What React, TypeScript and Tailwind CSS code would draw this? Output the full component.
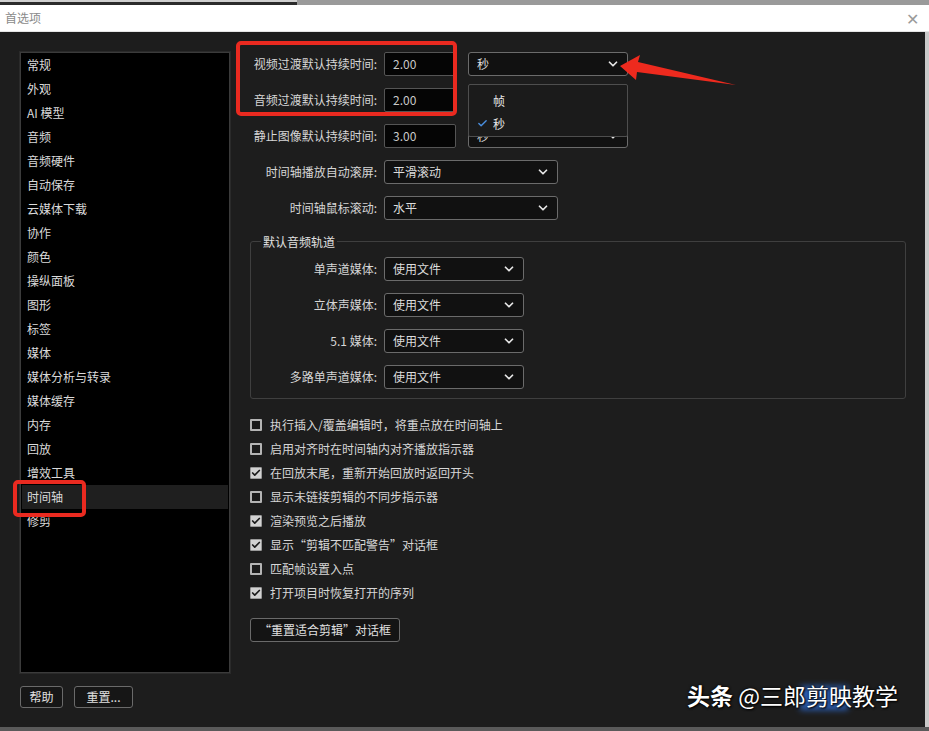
import { Check, ChevronDown } from "lucide-react";

const font = { fontFamily: '"Noto Sans CJK SC", "Noto Sans", sans-serif' };

const sidebarItems = [
  "常规",
  "外观",
  "AI 模型",
  "音频",
  "音频硬件",
  "自动保存",
  "云媒体下载",
  "协作",
  "颜色",
  "操纵面板",
  "图形",
  "标签",
  "媒体",
  "媒体分析与转录",
  "媒体缓存",
  "内存",
  "回放",
  "增效工具",
  "时间轴",
  "修剪",
];

const checks = [
  { text: "执行插入/覆盖编辑时，将重点放在时间轴上", on: false },
  { text: "启用对齐时在时间轴内对齐播放指示器", on: false },
  { text: "在回放末尾，重新开始回放时返回开头", on: true },
  { text: "显示未链接剪辑的不同步指示器", on: false },
  { text: "渲染预览之后播放", on: true },
  { text: "显示“剪辑不匹配警告”对话框", on: true },
  { text: "匹配帧设置入点", on: false },
  { text: "打开项目时恢复打开的序列", on: true },
];

function Select({ value, width }: { value: string; width: string }) {
  return (
    <div
      className={`${width} h-[24px] flex items-center justify-between pl-[8px] pr-[7px] bg-[#111111] border border-[#6b6b6b] rounded-[3px] text-[12px] text-[#dcdcdc]`}
    >
      <span>{value}</span>
      <ChevronDown className="w-[14px] h-[14px] text-[#e6e6e6]" strokeWidth={3} />
    </div>
  );
}

function NumInput({ value }: { value: string }) {
  return (
    <div className="w-[72px] h-[24px] flex items-center pl-[8px] bg-[#050505] border border-[#555555] rounded-[2px] text-[12px] text-[#c9c9c9]">
      {value}
    </div>
  );
}

function Row({ label, children }: { label: string; children: React.ReactNode }) {
  return (
    <div className="flex items-center h-[24px] gap-[7px]">
      <div className="w-[127px] text-right text-[12px] text-[#d6d6d6] whitespace-nowrap">{label}</div>
      {children}
    </div>
  );
}

function CheckRow({ text, on }: { text: string; on: boolean }) {
  return (
    <div className="flex items-center h-[24px] gap-[8px]">
      {on ? (
        <div className="w-[12px] h-[12px] bg-[#d2d2d2] border border-[#9a9a9a] rounded-[1px] flex items-center justify-center">
          <Check className="w-[10px] h-[10px] text-[#1a1a1a]" strokeWidth={4} />
        </div>
      ) : (
        <div className="w-[12px] h-[12px] bg-[#1a1a1a] border-2 border-[#b4b4b4] rounded-[1px]" />
      )}
      <span className="text-[12px] text-[#d6d6d6]">{text}</span>
    </div>
  );
}

export default function App() {
  return (
    <div className="relative w-[929px] h-[731px] bg-[#1d1d1d] overflow-hidden flex flex-col" style={font}>
      {/* window frame top */}
      <div className="h-[5px] bg-[#2b2b2b] flex">
        <div className="w-[297px] border-t-2 border-[#cfcfcf]" />
        <div className="flex-1 bg-[#9a9a9a]" />
      </div>
      <div className="h-[27px] bg-white flex items-center justify-between pl-[5px] pr-[10px] border-b border-[#e4e4e4]">
        <span className="text-[12px] text-[#8a8a8a]">首选项</span>
        <span className="text-[16px] text-[#9a9a9a] font-light leading-none">✕</span>
      </div>

      <div className="flex flex-1 border-r-4 border-[#c9c9c9]">
        {/* left */}
        <div className="ml-[20px] mt-[20px] w-[210px] flex flex-col">
          <div className="h-[621px] bg-black border border-[#3b3b3b] outline outline-1 outline-[#2a2a2a] px-[1px]">
            {sidebarItems.map((it) => (
              <div
                key={it}
                className={`h-[24px] flex items-center pl-[5px] text-[12px] text-[#dadada] ${
                  it === "时间轴" ? "bg-[#1f1f1f]" : ""
                }`}
              >
                {it}
              </div>
            ))}
          </div>
          <div className="flex gap-[11px] mt-[13px]">
            <div className="w-[43px] h-[22px] flex items-center justify-center bg-[#161616] border border-[#6a6a6a] rounded-[3px] text-[12px] text-[#e0e0e0]">
              帮助
            </div>
            <div className="w-[59px] h-[22px] flex items-center justify-center bg-[#161616] border border-[#6a6a6a] rounded-[3px] text-[12px] text-[#e0e0e0]">
              重置...
            </div>
          </div>
        </div>

        {/* right */}
        <div className="ml-[20px] mt-[20px] w-[656px] flex flex-col">
          <div className="flex flex-col gap-[12px]">
            <div className="flex items-center gap-[12px]">
              <Row label="视频过渡默认持续时间:">
                <NumInput value="2.00" />
              </Row>
              <Select value="秒" width="w-[160px]" />
            </div>
            <div className="flex items-center gap-[12px]">
              <Row label="音频过渡默认持续时间:">
                <NumInput value="2.00" />
              </Row>
            </div>
            <div className="flex items-center gap-[12px]">
              <Row label="静止图像默认持续时间:">
                <NumInput value="3.00" />
              </Row>
              <Select value="秒" width="w-[160px]" />
            </div>
            <Row label="时间轴播放自动滚屏:">
              <Select value="平滑滚动" width="w-[174px]" />
            </Row>
            <Row label="时间轴鼠标滚动:">
              <Select value="水平" width="w-[174px]" />
            </Row>
          </div>

          <div className="relative mt-[21px] h-[158px] border border-[#3f3f3f] rounded-[3px] pt-[15px] flex flex-col gap-[12px]">
            <span className="absolute -top-[9px] left-[10px] px-[2px] bg-[#1d1d1d] text-[12px] text-[#e0e0e0]">默认音频轨道</span>
            {["单声道媒体:", "立体声媒体:", "5.1 媒体:", "多路单声道媒体:"].map((l) => (
              <div key={l} className="-ml-px">
                <Row label={l}>
                  <Select value="使用文件" width="w-[140px]" />
                </Row>
              </div>
            ))}
          </div>

          <div className="mt-[14px] flex flex-col">
            {checks.map((c) => (
              <CheckRow key={c.text} text={c.text} on={c.on} />
            ))}
          </div>

          <div className="mt-[13px] w-[150px] h-[24px] flex items-center justify-center bg-[#141414] border border-[#6a6a6a] rounded-[3px] text-[12px] text-[#e0e0e0]">
            “重置适合剪辑”对话框
          </div>
        </div>
      </div>
      <div className="h-[4px] bg-[#5a5a5a]" />

      {/* open dropdown popup */}
      <div className="absolute left-[468px] top-[84px] w-[160px] h-[53px] bg-[#1b1b1b] border border-[#4e4e4e] rounded-[2px] pt-[4px]">
        <div className="h-[23px] flex items-center pl-[24px] text-[12px] text-[#e6e6e6]">帧</div>
        <div className="h-[23px] flex items-center pl-[8px] gap-[5px] text-[12px] text-[#e6e6e6]">
          <Check className="w-[11px] h-[11px] text-[#4a8fe0]" strokeWidth={3} />
          <span>秒</span>
        </div>
      </div>

      {/* annotations */}
      <div className="absolute left-[236px] top-[41px] w-[221px] h-[75px] border-4 border-[#ea2a20] rounded-[5px]" />
      <div className="absolute left-[13px] top-[480px] w-[73px] h-[37px] border-4 border-[#ea2a20] rounded-[5px]" />
      <svg className="absolute left-[610px] top-[52px]" width="130" height="40" viewBox="0 0 130 40">
        <path d="M10 14 L30 3 L28 10 L126 33 L27 20 L26 28 Z" fill="#ee2a1e" />
      </svg>

      {/* watermark */}
      <div className="absolute left-[800px] top-[686px] w-[48px] h-[24px] bg-[#2f6ed8] blur-[3px] opacity-80" />
      <div
        className="absolute left-[687px] top-[678px] text-[23px] text-white whitespace-nowrap"
        style={{ textShadow: "0 0 3px #000, 1px 1px 2px #000" }}
      >
        <span className="font-bold">头条</span> @三郎剪映教学
      </div>
    </div>
  );
}
